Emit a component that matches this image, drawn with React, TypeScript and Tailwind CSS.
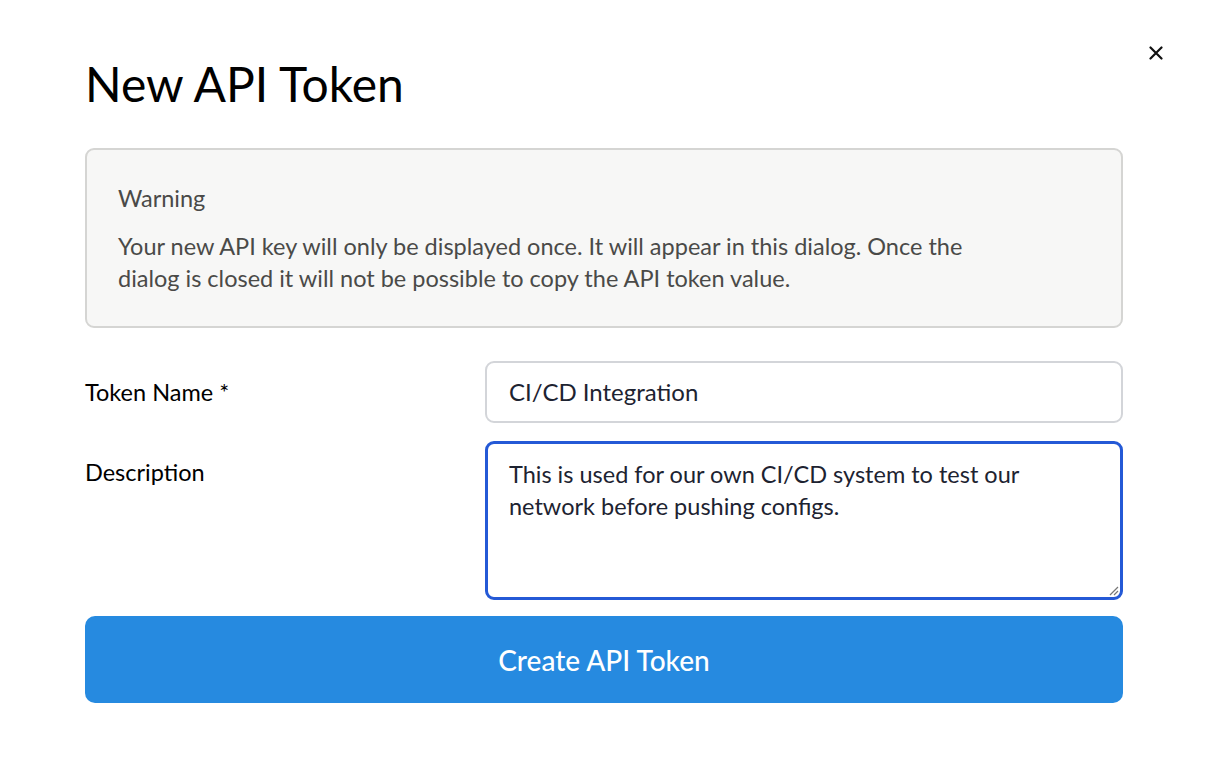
import React from "react";

export default function App() {
  return (
    <div className="relative w-[1206px] h-[774px] bg-white" style={{ fontFamily: "Lato, 'Noto Sans', sans-serif" }}>
      <button className="absolute left-[1149px] top-[46px] w-[14px] h-[14px] flex items-center justify-center" aria-label="Close">
        <svg width="14" height="14" viewBox="0 0 14 14" fill="none">
          <path d="M1.5 1.5L12.5 12.5M12.5 1.5L1.5 12.5" stroke="#111" strokeWidth="2.2" strokeLinecap="round" />
        </svg>
      </button>
      <div className="flex flex-col px-[85px] pt-[55px] w-[1208px]">
        <h1 className="text-[48px] leading-[58px] text-black font-normal">New API Token</h1>
        <div className="mt-[35px] w-[1038px] rounded-[9px] border-2 border-[#d5d5d3] bg-[#f7f7f6] px-[31px] pt-[32px] pb-[32px]">
          <div className="text-[23.5px] leading-[32px] text-[#4a4a48]">Warning</div>
          <p className="mt-[16px] text-[23.5px] leading-[32px] text-[#4a4a48] max-w-[870px]">
            Your new API key will only be displayed once. It will appear in this dialog. Once the dialog is closed it will not be possible to copy the API token value.
          </p>
        </div>
        <div className="mt-[33px] grid grid-cols-[400px_638px] gap-y-[18px]">
          <label className="text-[23.5px] leading-[62px] text-black">Token Name *</label>
          <div className="h-[62px] rounded-[9px] border-2 border-[#d3d5d9] bg-white px-[22px] flex items-center text-[24px] text-[#1d2331]">
            CI/CD Integration
          </div>
          <label className="text-[23.5px] leading-[62px] text-black">Description</label>
          <div className="relative h-[159px] rounded-[9px] border-[3px] border-[#2459d6] bg-white px-[21px] pt-[14px] text-[23.5px] leading-[32px] text-[#1d2331]">
            This is used for our own CI/CD system to test our network before pushing configs.
            <svg className="absolute right-[1px] bottom-[1px]" width="12" height="12" viewBox="0 0 12 12">
              <path d="M11 3L3 11M11 7L7 11" stroke="#777" strokeWidth="1.2" />
            </svg>
          </div>
        </div>
        <button className="mt-[16px] w-[1038px] h-[87px] rounded-[10px] bg-[#268ae0] text-white text-[28px] font-medium flex items-center justify-center">
          Create API Token
        </button>
      </div>
    </div>
  );
}
